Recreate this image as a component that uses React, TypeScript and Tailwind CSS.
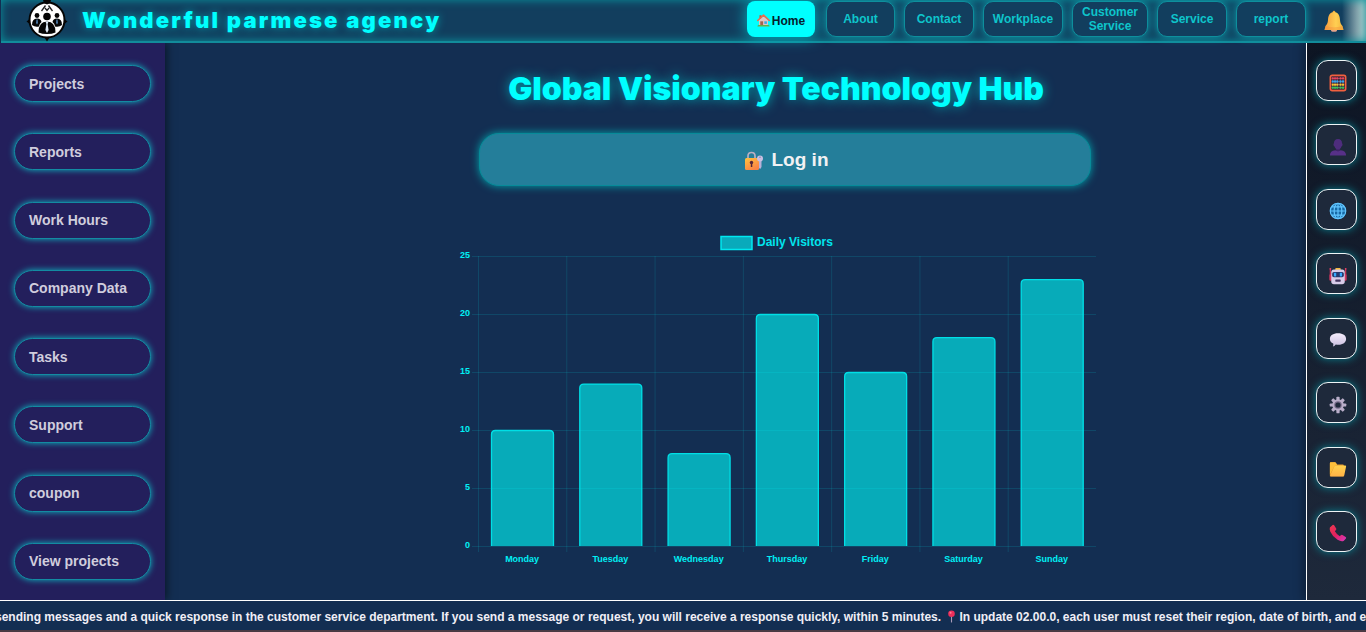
import React from "react";

const navItems = [
  { label: "About", width: "w-[69px]" },
  { label: "Contact", width: "w-[70px]" },
  { label: "Workplace", width: "w-[80px]" },
  { label: "Customer Service", width: "w-[76px]" },
  { label: "Service", width: "w-[70px]" },
  { label: "report", width: "w-[70px]" },
];

const sideItems = [
  "Projects",
  "Reports",
  "Work Hours",
  "Company Data",
  "Tasks",
  "Support",
  "coupon",
  "View projects",
];

const visitors = [
  { day: "Monday", count: 10 },
  { day: "Tuesday", count: 14 },
  { day: "Wednesday", count: 8 },
  { day: "Thursday", count: 20 },
  { day: "Friday", count: 15 },
  { day: "Saturday", count: 18 },
  { day: "Sunday", count: 23 },
];

function Logo() {
  return (
    <svg viewBox="0 0 42 42" className="h-[42px] w-[42px] shrink-0" aria-hidden="true">
      <path d="M0.5 21.5 L5 18 V25 Z M41.5 21.5 L37 18 V25 Z M21 41.5 L17.5 36 H24.5 Z" fill="#050505" />
      <circle cx="21" cy="20" r="17.5" fill="#fff" stroke="#050505" strokeWidth="2" />
      <path d="M17 0 H25 L24 3 L21 4.5 L18 3 Z" fill="#050505" />
      <path d="M19.5 5.5 L15.5 11 M22.5 5.5 L26.5 11 M19 8 L21 10.5 L23 8" stroke="#222" strokeWidth="1.3" fill="none" />
      <circle cx="21" cy="16.5" r="3.8" fill="#050505" />
      <circle cx="11" cy="15.500" r="2.4" fill="#050505" />
      <circle cx="31" cy="15.500" r="2.4" fill="#050505" />
      <path d="M6 25 Q6 18.500 11 18.500 Q15 18.500 15.500 22 Q13 24 13 26.500 Q9 27.500 6 25 Z" fill="#050505" />
      <path d="M36 25 Q36 18.500 31 18.500 Q27 18.500 26.500 22 Q29 24 29 26.500 Q33 27.500 36 25 Z" fill="#050505" />
      <path d="M12.500 32.500 Q12.500 21.500 21 21.500 Q29.500 21.500 29.500 32.500 Q26 34 21 34 Q16 34 12.500 32.500 Z" fill="#050505" />
      <path d="M19.500 21.500 H22.500 L21.600 24 L22.600 30 L21 33 L19.400 30 L20.400 24 Z" fill="#dce8f5" />
      <path d="M10.500 19.500 H11.600 L11.800 23 L11 24.500 L10.200 23 Z M30.400 19.500 H31.500 L31.800 23 L31 24.500 L30.200 23 Z" fill="#5b8fc4" />
    </svg>
  );
}

function HouseIcon() {
  return (
    <svg viewBox="0 0 16 16" className="h-[13px] w-[13px]" aria-hidden="true">
      <rect x="3" y="1.500" width="2.500" height="5" fill="#c9573d" />
      <path d="M2.500 7.500 L8 3 L13.500 7.500 V15 H2.500 Z" fill="#dfc6c6" />
      <path d="M0.800 8 L8 1.500 L15.200 8" stroke="#ef6a4c" strokeWidth="2" strokeLinecap="round" strokeLinejoin="round" fill="none" />
      <rect x="4" y="9" width="3.500" height="5.500" fill="#a3644d" />
      <rect x="9" y="9" width="3.200" height="3.200" fill="#3fa5e8" />
      <path d="M0.500 15.500 Q0.800 12.800 3 13.500 H13 Q15.300 12.800 15.500 15.500 Z" fill="#5fb04a" />
    </svg>
  );
}

function BellIcon() {
  return (
    <svg viewBox="0 0 20 22" className="h-[22px] w-[20px]" aria-hidden="true">
      <defs>
        <linearGradient id="bell" x1="0" x2="1">
          <stop offset="0" stopColor="#f59a3e" />
          <stop offset="0.6" stopColor="#ffcf52" />
          <stop offset="1" stopColor="#f2b53c" />
        </linearGradient>
      </defs>
      <circle cx="10" cy="2" r="1.300" fill="#eaa53c" />
      <ellipse cx="10" cy="20.200" rx="3" ry="1.500" fill="#e8a58a" />
      <path d="M10 1.800 C5.500 2.500 4.200 6 4 10 C3.800 13 3 14.500 1.500 16 L0.500 20 H19.500 L18.500 16 C17 14.500 16.200 13 16 10 C15.800 6 14.500 2.500 10 1.800 Z" fill="url(#bell)" />
      <path d="M1.500 16 Q10 18.500 18.500 16 L19.500 20 H0.500 Z" fill="#f58d3c" opacity="0.400" />
    </svg>
  );
}

function LockIcon() {
  return (
    <svg viewBox="0 0 20 20" className="h-[20px] w-[20px]" aria-hidden="true">
      <defs>
        <linearGradient id="lock" x1="0" y1="0" x2="0.6" y2="1">
          <stop offset="0" stopColor="#ffc43f" />
          <stop offset="1" stopColor="#f98245" />
        </linearGradient>
      </defs>
      <path d="M4 9 V5 Q4 1.500 7.500 1.500 Q11 1.500 11 5 V9" stroke="#b9aec2" strokeWidth="1.700" fill="none" />
      <rect x="1" y="7" width="14" height="12" rx="1.500" fill="url(#lock)" />
      <circle cx="7.500" cy="11.500" r="1.700" fill="#54253a" />
      <rect x="6.800" y="12" width="1.500" height="4" fill="#54253a" />
      <path d="M15 9 H17.500 V16 L16.200 18 L15 17 Z" fill="#b9b0d8" />
      <circle cx="16" cy="7.500" r="3" fill="#c9c0e2" />
      <circle cx="16" cy="6.200" r="0.800" fill="#8d84ad" />
    </svg>
  );
}

function AbacusIcon() {
  const rows = [
    { y: 4.800, color: "#f0405a" },
    { y: 8.300, color: "#35a6f2" },
    { y: 11.800, color: "#f8c433" },
    { y: 15.200, color: "#35c65a" },
  ];
  return (
    <svg viewBox="0 0 20 20" className="h-[18px] w-[18px]" aria-hidden="true">
      <rect x="1.500" y="1.500" width="17" height="17" rx="2" fill="#3c2638" stroke="#f2603f" strokeWidth="1.800" />
      {rows.map((row) => (
        <g key={row.color} fill={row.color}>
          <rect x="3" y={row.y - 0.3} width="14" height="0.600" fill="#9b8aa8" />
          {[4.200, 6.700, 9.200, 12.800, 15.600].map((x) => (
            <rect key={x} x={x - 1.1} y={row.y - 1.3} width="2.200" height="2.600" rx="0.700" />
          ))}
        </g>
      ))}
    </svg>
  );
}

function PersonIcon() {
  return (
    <svg viewBox="0 0 20 20" className="h-[18px] w-[18px]" aria-hidden="true">
      <path d="M5.500 6 Q5.500 1 10 1 Q14.500 1 14.500 6 Q15.300 6 15 7.500 Q14.700 9.300 14 9.300 Q13.300 11.300 12.300 12 V14 H7.700 V12 Q6.700 11.300 6 9.300 Q5.300 9.300 5 7.500 Q4.700 6 5.500 6 Z" fill="#4e2d7d" />
      <path d="M1 19.500 Q1 14 7 13.500 L10 14.500 L13 13.500 Q19 14 19 19.500 Z" fill="#573088" />
      <path d="M7.700 12 Q10 13.500 12.300 12 V14 L10 15 L7.700 14 Z" fill="#3d2366" />
    </svg>
  );
}

function GlobeIcon() {
  return (
    <svg viewBox="0 0 20 20" className="h-[18px] w-[18px]" aria-hidden="true">
      <circle cx="10" cy="10" r="9" fill="#1769a5" />
      <g stroke="#62c6ff" strokeWidth="1.300" fill="none">
        <circle cx="10" cy="10" r="8.600" />
        <ellipse cx="10" cy="10" rx="4.300" ry="8.600" />
        <path d="M10 1.500 V18.500 M1.500 10 H18.500 M3 5.500 H17 M3 14.500 H17" />
      </g>
    </svg>
  );
}

function RobotIcon() {
  return (
    <svg viewBox="0 0 20 20" className="h-[18px] w-[18px]" aria-hidden="true">
      <path d="M1.500 2 V15 M18.500 2 V15" stroke="#cb3155" strokeWidth="1.400" />
      <circle cx="1.500" cy="2" r="1" fill="#ed4267" />
      <circle cx="18.500" cy="2" r="1" fill="#ed4267" />
      <rect x="0.500" y="8" width="3" height="7" rx="1" fill="#d33761" />
      <rect x="16.500" y="8" width="3" height="7" rx="1" fill="#d33761" />
      <rect x="7" y="1" width="6" height="3" rx="1" fill="#f5b93d" />
      <rect x="2.500" y="2.800" width="15" height="16.400" rx="3" fill="#d8cbe8" />
      <rect x="3.500" y="5.500" width="13" height="6" rx="2" fill="#263a70" />
      <rect x="5.500" y="6.500" width="2.500" height="4" rx="0.800" fill="#38aaff" />
      <rect x="12" y="6.500" width="2.500" height="4" rx="0.800" fill="#38aaff" />
      <rect x="7" y="14" width="6" height="2.400" rx="0.500" fill="#43345e" />
    </svg>
  );
}

function SpeechIcon() {
  return (
    <svg viewBox="0 0 20 20" className="h-[18px] w-[18px]" aria-hidden="true">
      <defs>
        <linearGradient id="speech" x1="0" y1="0" x2="0" y2="1">
          <stop offset="0" stopColor="#f4edfc" />
          <stop offset="1" stopColor="#cabfe0" />
        </linearGradient>
      </defs>
      <path d="M10 2.500 C15.500 2.500 19 5 19 8.800 C19 12.600 15.500 15.200 10.500 15.200 Q9 15.200 7.500 14.900 Q6 17.200 4.300 17.200 Q5.200 15.500 4.700 14 Q1 12.200 1 8.800 C1 5 4.500 2.500 10 2.500 Z" fill="url(#speech)" />
    </svg>
  );
}

function GearIcon() {
  return (
    <svg viewBox="0 0 20 20" className="h-[18px] w-[18px]" aria-hidden="true">
      <g fill="#b9aec9">
        {[0, 45, 90, 135].map((angle) => (
          <rect key={angle} x="8.200" y="0.800" width="3.600" height="18.400" rx="1" transform={`rotate(${angle} 10 10)`} />
        ))}
        <circle cx="10" cy="10" r="6.400" />
      </g>
      <circle cx="10" cy="10" r="4.200" fill="#756a88" />
      <circle cx="10" cy="10" r="2.900" fill="#202a3c" />
    </svg>
  );
}

function FolderIcon() {
  return (
    <svg viewBox="0 0 20 20" className="h-[18px] w-[18px]" aria-hidden="true">
      <defs>
        <linearGradient id="folder" x1="0" y1="0" x2="0" y2="1">
          <stop offset="0" stopColor="#ffd24d" />
          <stop offset="1" stopColor="#ffb247" />
        </linearGradient>
      </defs>
      <path d="M1 3.500 Q1 2.500 2 2.500 H7 L9 5 H15.500 Q16.500 5 16.500 6 V18 H1 Z" fill="#e79b2e" />
      <path d="M6 7 Q6.300 6 7.300 6 H18 Q19.300 6 19 7.300 L17 17 Q16.700 18.300 15.500 18.300 H2 Q1 18.300 1.500 17 Z" fill="url(#folder)" />
      <path d="M1 3.500 Q1 2.500 2 2.500 H7 L9 5 L6 7 L1 16 Z" fill="#fdbf3b" />
    </svg>
  );
}

function PhoneIcon() {
  return (
    <svg viewBox="0 0 20 20" className="h-[18px] w-[18px]" aria-hidden="true">
      <defs>
        <linearGradient id="phone" x1="0" y1="0" x2="1" y2="1">
          <stop offset="0" stopColor="#f03a4e" />
          <stop offset="0.5" stopColor="#e02060" />
          <stop offset="1" stopColor="#d93bc0" />
        </linearGradient>
      </defs>
      <path d="M1 4 L4 1 Q5 0.500 5.700 1.500 L8 5 Q8.500 6 7.500 7 L6.500 8 Q8.500 11.500 12 13.500 L13 12.500 Q14 11.500 15 12.200 L18.500 14.500 Q19.500 15.200 18.800 16.200 L16.500 18.500 Q14 20 9.500 17.500 Q4 14 1.500 8.500 Q0.300 5.500 1 4 Z" fill="url(#phone)" />
    </svg>
  );
}

function PinIcon() {
  return (
    <svg viewBox="0 0 12 14" className="mx-[2px] h-[13px] w-[11px]" aria-hidden="true">
      <rect x="5.400" y="6" width="1.200" height="7.500" fill="#a99bb8" />
      <circle cx="6" cy="4" r="3.600" fill="#ee2f5b" />
      <circle cx="5" cy="3" r="1.100" fill="#ff7f95" />
    </svg>
  );
}

const tools = [
  { label: "Calculator", Icon: AbacusIcon },
  { label: "Profile", Icon: PersonIcon },
  { label: "Language", Icon: GlobeIcon },
  { label: "Assistant", Icon: RobotIcon },
  { label: "Chat", Icon: SpeechIcon },
  { label: "Settings", Icon: GearIcon },
  { label: "Files", Icon: FolderIcon },
  { label: "Call", Icon: PhoneIcon },
];

const LEFT = 22;
const TOP = 26;
const BOTTOM = 316;
const STEP = 618 / 7;

function VisitorsChart() {
  const yOf = (value: number) => BOTTOM - (value * (BOTTOM - TOP)) / 25;
  return (
    <svg viewBox="0 0 641 340" className="mt-11 block w-full font-bold" role="img" aria-label="Daily Visitors">
      <rect x="265" y="6.500" width="31" height="13" fill="#09aabb" stroke="#00e8f0" strokeWidth="1.500" />
      <text x="301" y="16" fontSize="12" fill="#00e5ee">Daily Visitors</text>
      <g stroke="#00ffff" strokeOpacity="0.120" strokeWidth="1">
        {[0, 5, 10, 15, 20, 25].map((value) => (
          <line key={value} x1={LEFT - 6} x2="640" y1={yOf(value) + 0.5} y2={yOf(value) + 0.5} />
        ))}
        {visitors.map((item, i) => (
          <line key={item.day} x1={LEFT + i * STEP + 0.5} x2={LEFT + i * STEP + 0.5} y1={TOP} y2={BOTTOM + 6} />
        ))}
      </g>
      <g fontSize="9" fill="#00f0f5" textAnchor="end">
        {[0, 5, 10, 15, 20, 25].map((value) => (
          <text key={value} x="14" y={yOf(value) + 2}>{value}</text>
        ))}
      </g>
      {visitors.map((item, i) => {
        const x = LEFT + i * STEP + 13.5;
        const y = yOf(item.count) + 0.5;
        const edge = `M${x} ${BOTTOM} V${y + 4} Q${x} ${y} ${x + 4} ${y} H${x + 58} Q${x + 62} ${y} ${x + 62} ${y + 4} V${BOTTOM}`;
        return (
          <g key={item.day}>
            <path d={edge} fill="#00ffff" fillOpacity="0.600" stroke="#00dfe6" strokeWidth="1.300" />
            <text x={LEFT + (i + 0.5) * STEP} y="332" fontSize="9" fill="#00f0f5" textAnchor="middle">{item.day}</text>
          </g>
        );
      })}
    </svg>
  );
}

export default function App() {
  return (
    <div className="flex min-h-screen flex-col overflow-hidden bg-[#132e52] font-['Liberation_Sans',Arial,sans-serif]">
      <header className="relative z-20 ml-px flex h-[43px] items-center border-b-2 border-[#128c9b] bg-[linear-gradient(to_right,#123e5e_calc(100%-24px),#a9c4c5_calc(100%-4px))] pr-[22px] pl-[25px] shadow-[inset_0_0_10px_#0a939d]">
        <Logo />
        <span className="ml-[14px] font-['Inter',sans-serif] text-[22px] font-black tracking-widest whitespace-nowrap text-[#00ffff] [text-shadow:0_0_8px_#00a5b0]">
          Wonderful parmese agency
        </span>
        <nav className="ml-auto flex items-center gap-[9px] pb-[3px] text-[12px] leading-[14px] font-bold">
          <a href="#home" className="mr-[2px] flex h-9 w-[68px] items-center justify-center gap-[2px] rounded-lg bg-[#00ffff] pt-[3px] text-[#06202c] shadow-[0_0_15px_#00b8c4]">
            <HouseIcon />
            <span>Home</span>
          </a>
          {navItems.map((item) => (
            <a
              key={item.label}
              href={`#${item.label.toLowerCase().replace(" ", "-")}`}
              className={`flex h-9 items-center justify-center rounded-[10px] border border-[#0e8f9d] bg-[#123e5e] px-2 text-center text-[#0ec5cb] shadow-[0_0_8px_#0ba3ae] ${item.width}`}
            >
              {item.label}
            </a>
          ))}
        </nav>
        <button type="button" aria-label="Notifications" className="ml-[18px]">
          <BellIcon />
        </button>
      </header>

      <div className="flex flex-1">
        <aside className="relative z-10 flex w-[165px] shrink-0 flex-col justify-between bg-[#231f5c] px-[14px] pt-[22px] pb-[20px] shadow-[2px_0_8px_rgba(0,0,0,0.5)]">
          {sideItems.map((item) => (
            <button
              key={item}
              type="button"
              className="h-[37px] rounded-[19px] border border-[#138ba2] bg-[#231f5c] px-[14px] pt-px text-left text-[14px] font-bold text-[#d0cddd] shadow-[0_0_6px_#0fb4c0]"
            >
              {item}
            </button>
          ))}
        </aside>

        <main className="flex min-w-0 flex-1 flex-col items-center pl-[81px]">
          <div className="w-full max-w-[641px]">
            <h1 className="mt-[26px] text-center font-['Inter',sans-serif] text-[32px] leading-[40px] font-black text-[#00ffff] [text-shadow:0_0_12px_#00a5b0]">
              Global Visionary Technology Hub
            </h1>
            <div className="mt-[24px] pr-[6px] pl-[23px]">
              <button
                type="button"
                className="flex h-[53px] w-full items-center justify-center gap-2 rounded-[20px] border border-[#078b99] bg-[#247e9a] pt-[2px] pl-[3px] text-[19px] font-bold text-[#f1f1f3] shadow-[0_0_8px_#00a5ae]"
              >
                <LockIcon />
                <span>Log in</span>
              </button>
            </div>
            <VisitorsChart />
          </div>
        </main>

        <aside className="relative z-10 flex w-[60px] shrink-0 flex-col items-center justify-between border-l border-white bg-linear-to-b from-[#0d1523] to-[#1e293b] pt-[17px] pb-[48px] shadow-[-2px_0_10px_rgba(0,0,0,0.35)]">
          {tools.map(({ label, Icon }) => (
            <button
              key={label}
              type="button"
              aria-label={label}
              className="flex h-[41px] w-[41px] items-center justify-center rounded-xl border border-[#eef4f6] bg-[#1e293b] pt-1 pl-[2px] shadow-[0_0_8px_#087d8c]"
            >
              <Icon />
            </button>
          ))}
        </aside>
      </div>

      <footer className="relative z-20 flex h-8 items-center overflow-hidden border-t border-b-2 border-t-white border-b-[#493943] bg-[#132e52] pt-[2px] text-[12px] font-bold whitespace-nowrap text-[#f0eef6]">
        <p className="-ml-[5px] flex items-center">
          <span>
            sending messages and a quick response in the customer service department. If you send a message or request, you will receive a response quickly, within 5 minutes.&nbsp;
          </span>
          <PinIcon />
          <span>In update 02.00.0, each user must reset their region, date of birth, and enter</span>
        </p>
      </footer>
    </div>
  );
}
